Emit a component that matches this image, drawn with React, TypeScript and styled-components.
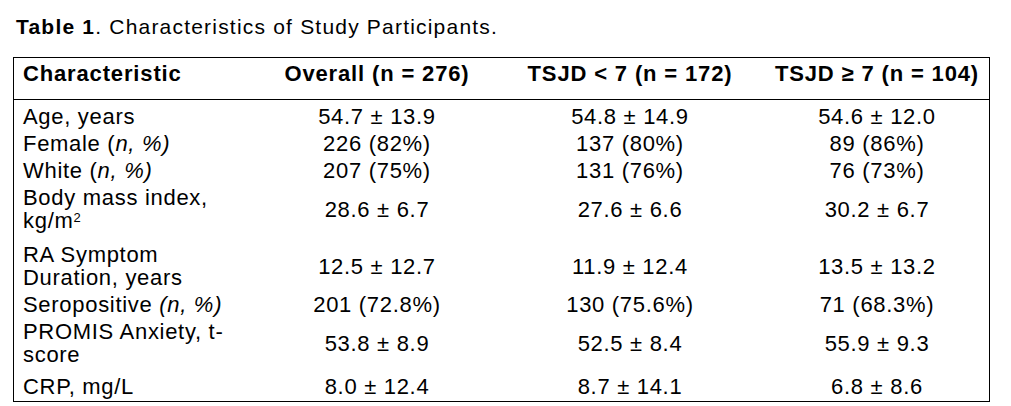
import React from 'react';
import styled, { createGlobalStyle } from 'styled-components';

const GlobalStyle = createGlobalStyle`
  html, body { margin:0; background:#fff; }
  body { font-family:"Liberation Sans", Arial, Helvetica, sans-serif; color:#000; }
`;

const Page = styled.div`
  padding:15px 0 0 13px;
`;

const Title = styled.h1`
  margin:0 0 19px 3px;
  font-size:21px; line-height:23px; font-weight:400; letter-spacing:1.2px;
  b { font-weight:700; }
`;

const Table = styled.table`
  width:977px; table-layout:fixed;
  border-collapse:separate; border-spacing:0;
  border:1px solid #000;
  font-size:22px; line-height:23px;
`;

const Col = styled.col<{ $w: number }>`
  width:${p => p.$w}px;
`;

const Head = styled.th`
  padding:4px 2px 14px; border-bottom:1px solid #000;
  font-weight:700; letter-spacing:0.85px; text-align:center; white-space:nowrap;
  &:first-child { text-align:left; padding-left:9px; }
`;

const Row = styled.tr<{ $after?: number }>`
  & > td { padding-bottom:${p => 2 + (p.$after ?? 0)}px; }
  &:first-child > td { padding-top:5px; }
  &:last-child > td { padding-bottom:3px; }
`;

const Cell = styled.td`
  padding:2px 2px; vertical-align:middle;
  text-align:center; letter-spacing:0.7px; white-space:nowrap;
  &:first-child { text-align:left; padding-left:9px; }
  i { font-style:italic; }
`;

const Sup = styled.sup`
  font-size:13px; line-height:0; vertical-align:6px; letter-spacing:0;
`;

type Entry = { label: React.ReactNode; values: [string, string, string]; after?: number };

const ROWS: Entry[] = [
  { label: 'Age, years', values: ['54.7 ± 13.9', '54.8 ± 14.9', '54.6 ± 12.0'] },
  { label: <>Female (<i>n, %)</i></>, values: ['226 (82%)', '137 (80%)', '89 (86%)'] },
  { label: <>White (<i>n, %)</i></>, values: ['207 (75%)', '131 (76%)', '76 (73%)'] },
  { label: <>Body mass index,<br />kg/m<Sup>2</Sup></>, values: ['28.6 ± 6.7', '27.6 ± 6.6', '30.2 ± 6.7'], after: 7 },
  { label: <>RA Symptom<br />Duration, years</>, values: ['12.5 ± 12.7', '11.9 ± 12.4', '13.5 ± 13.2'] },
  { label: <>Seropositive <i>(n, %)</i></>, values: ['201 (72.8%)', '130 (75.6%)', '71 (68.3%)'] },
  { label: <>PROMIS Anxiety, t-<br />score</>, values: ['53.8 ± 8.9', '52.5 ± 8.4', '55.9 ± 9.3'], after: 5 },
  { label: 'CRP, mg/L', values: ['8.0 ± 12.4', '8.7 ± 14.1', '6.8 ± 8.6'] },
];

export default function App() {
  return (
    <>
      <GlobalStyle />
      <Page>
        <Title><b>Table 1</b>. Characteristics of Study Participants.</Title>
        <Table>
          <colgroup>
            <Col $w={245} />
            <Col $w={236} />
            <Col $w={270} />
            <Col $w={224} />
          </colgroup>
          <thead>
            <tr>
              <Head>Characteristic</Head>
              <Head>Overall (n = 276)</Head>
              <Head>TSJD &lt; 7 (n = 172)</Head>
              <Head>TSJD ≥ 7 (n = 104)</Head>
            </tr>
          </thead>
          <tbody>
            {ROWS.map((r, i) => (
              <Row key={i} $after={r.after}>
                <Cell>{r.label}</Cell>
                {r.values.map((v, j) => <Cell key={j}>{v}</Cell>)}
              </Row>
            ))}
          </tbody>
        </Table>
      </Page>
    </>
  );
}
